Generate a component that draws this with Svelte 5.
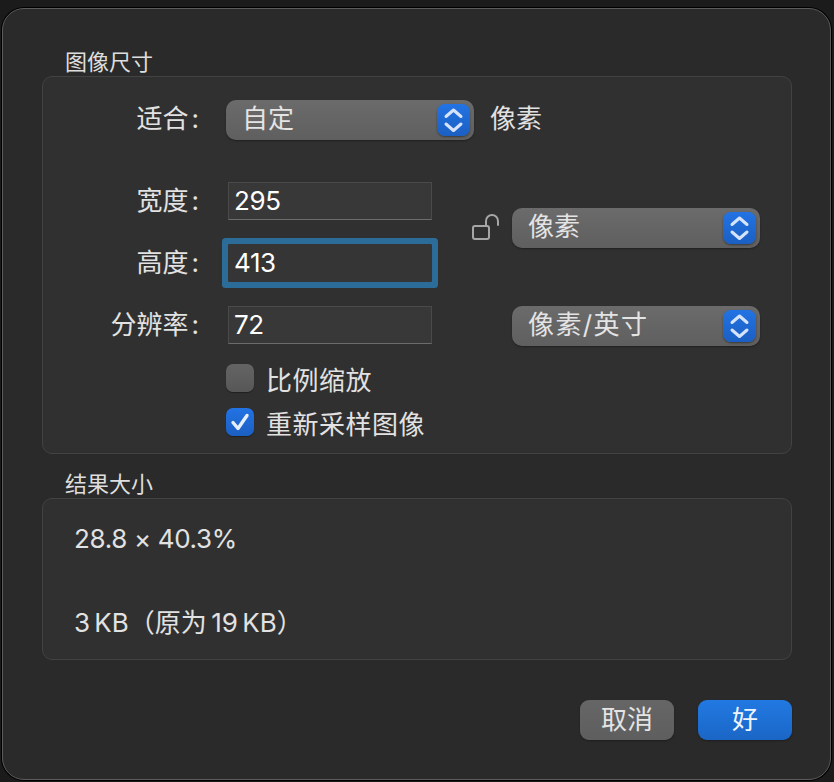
<script>
	const stepperPath = 'M9 12.5 L16.5 6 L24 12.5 M9 20 L16.5 26.5 L24 20';
</script>

{#snippet popup(label)}
	<div class="popup">
		<span class="popup-label">{label}</span>
		<span class="stepper">
			<svg width="33" height="32" viewBox="0 0 33 32" fill="none">
				<path d={stepperPath} stroke="#d6e4fb" stroke-width="3" stroke-linecap="round" stroke-linejoin="round" />
			</svg>
		</span>
	</div>
{/snippet}

<div class="page">
	<div class="dialog">
		<div class="group-title">图像尺寸</div>
		<section class="group size-group">
			<div class="fit-row">
				<div class="label">适合<span class="colon">:</span></div>
				{@render popup('自定')}
				<span class="unit">像素</span>
			</div>

			<div class="fields">
				<div class="label">宽度<span class="colon">:</span></div>
				<div class="field">295</div>
				<div class="lock">
					<svg width="30" height="30" viewBox="0 0 30 30" fill="none" stroke="#a6a6a6" stroke-width="2">
						<rect x="3" y="14" width="16" height="13" rx="2" />
						<path d="M16 13 V9 a6 6 0 0 1 12 0 V13" stroke-linecap="round" />
					</svg>
				</div>
				<div class="unit-popup">{@render popup('像素')}</div>

				<div class="label">高度<span class="colon">:</span></div>
				<div class="field focused">413</div>

				<div class="label">分辨率<span class="colon">:</span></div>
				<div class="field">72</div>
				<div class="res-popup">{@render popup('像素/英寸')}</div>
			</div>

			<div class="checks">
				<div class="check-row">
					<span class="checkbox"></span>
					<span>比例缩放</span>
				</div>
				<div class="check-row">
					<span class="checkbox checked">
						<svg width="28" height="28" viewBox="0 0 28 28" fill="none">
							<path d="M7 14.5 L12 20.5 L21 7.5" stroke="#e6effc" stroke-width="3.4" stroke-linecap="round" stroke-linejoin="round" />
						</svg>
					</span>
					<span>重新采样图像</span>
				</div>
			</div>
		</section>

		<div class="group-title second">结果大小</div>
		<section class="group result-group">
			<div class="ratio">28.8 × 40.3%</div>
			<div class="tight">3 KB（原为 19 KB）</div>
		</section>

		<div class="actions">
			<button class="btn">取消</button>
			<button class="btn primary">好</button>
		</div>
	</div>
</div>

<style>
	:global(body) {
		margin: 0;
		background: #1b1b1b;
	}

	.page {
		box-sizing: border-box;
		width: 834px;
		height: 782px;
		padding: 8px 3px 2px 2px;
		font-family: Inter, "Noto Sans CJK SC", sans-serif;
		font-size: 26px;
		color: #e2e2e2;
	}

	.dialog {
		box-sizing: border-box;
		height: 100%;
		padding: 39px 38px 0 39px;
		background: #2a2a2a;
		border: 1px solid #5c5c5c;
		border-radius: 22px;
		box-shadow: 0 0 0 1px #000;
	}

	.group-title {
		padding-left: 23px;
		font-size: 22px;
		line-height: 28px;
		color: #dedede;
	}

	.group-title.second {
		margin-top: 16px;
	}

	.group {
		box-sizing: border-box;
		background: #303030;
		border: 1px solid #424242;
		border-radius: 10px;
	}

	.size-group {
		height: 378px;
		padding-top: 23px;
	}

	.fit-row {
		display: flex;
		align-items: center;
		height: 40px;
	}

	.fit-row .label {
		width: 183px;
		flex: none;
		padding-right: 27px;
		padding-bottom: 2px;
	}

	.label {
		box-sizing: border-box;
		padding-right: 29px;
		text-align: right;
		line-height: 38px;
		white-space: nowrap;
	}

	.colon {
		margin-left: 3px;
	}

	.unit {
		margin-left: 16px;
		padding-bottom: 2px;
		line-height: 36px;
	}

	.popup {
		box-sizing: border-box;
		display: flex;
		align-items: center;
		justify-content: space-between;
		width: 248px;
		height: 40px;
		padding: 0 4px 0 16px;
		border-radius: 10px;
		background: linear-gradient(180deg, #6b6b6b, #5f5f5f);
		box-shadow: 0 1px 2px rgba(0, 0, 0, 0.35);
		color: #e4e4e4;
	}

	.popup-label {
		line-height: 36px;
		padding-bottom: 2px;
	}

	.res-popup .popup-label {
		letter-spacing: 1.4px;
	}

	.stepper {
		display: flex;
		width: 33px;
		height: 32px;
		border-radius: 8px;
		background: linear-gradient(180deg, #2273e4, #1b5fc2);
		box-shadow: 0 1px 2px rgba(0, 0, 0, 0.4);
	}

	.fields {
		display: grid;
		grid-template-columns: 185px 204px 80px 248px;
		grid-template-rows: 38px 38px 38px;
		row-gap: 24px;
		margin-top: 42px;
	}

	.field {
		box-sizing: border-box;
		height: 38px;
		padding-left: 5px;
		line-height: 36px;
		letter-spacing: -0.4px;
		color: #fff;
		background: #383838;
		border: 1px solid #4a4a4a;
		border-bottom-color: #6c6c6c;
	}

	.field.focused {
		background: #353535;
		border-color: #353535;
		box-shadow: 0 0 0 6px #2b6c99;
		border-radius: 1px;
	}

	.lock {
		grid-column: 3;
		grid-row: 1 / 3;
		margin: 30px 0 0 38px;
	}

	.unit-popup {
		grid-column: 4;
		grid-row: 1 / 3;
		margin-top: 26px;
	}

	.res-popup {
		grid-column: 4;
	}

	.checks {
		display: flex;
		flex-direction: column;
		gap: 16px;
		margin: 20px 0 0 183px;
	}

	.check-row {
		display: flex;
		align-items: center;
		gap: 12px;
		height: 28px;
		letter-spacing: 0.5px;
	}

	.checkbox {
		width: 28px;
		height: 28px;
		flex: none;
		border-radius: 7px;
		background: linear-gradient(180deg, #646464, #575757);
		box-shadow: 0 1px 1px rgba(0, 0, 0, 0.35);
	}

	.checkbox.checked {
		background: linear-gradient(180deg, #2273e4, #1b5fc2);
	}

	.result-group {
		display: flex;
		flex-direction: column;
		gap: 42px;
		height: 162px;
		margin-bottom: 40px;
		padding: 19px 0 0 31px;
		line-height: 42px;
	}

	.ratio {
		letter-spacing: -0.35px;
	}

	.tight {
		word-spacing: -3px;
	}

	.actions {
		display: flex;
		justify-content: flex-end;
		gap: 24px;
	}

	.btn {
		width: 94px;
		height: 40px;
		padding: 0;
		border: none;
		border-radius: 9px;
		background: linear-gradient(180deg, #666666, #5e5e5e);
		box-shadow: 0 1px 2px rgba(0, 0, 0, 0.3);
		color: #e4e4e4;
		font: inherit;
		line-height: 36px;
	}

	.btn.primary {
		background: linear-gradient(180deg, #2279e2, #1a66c6);
		color: #eef4fd;
	}
</style>
